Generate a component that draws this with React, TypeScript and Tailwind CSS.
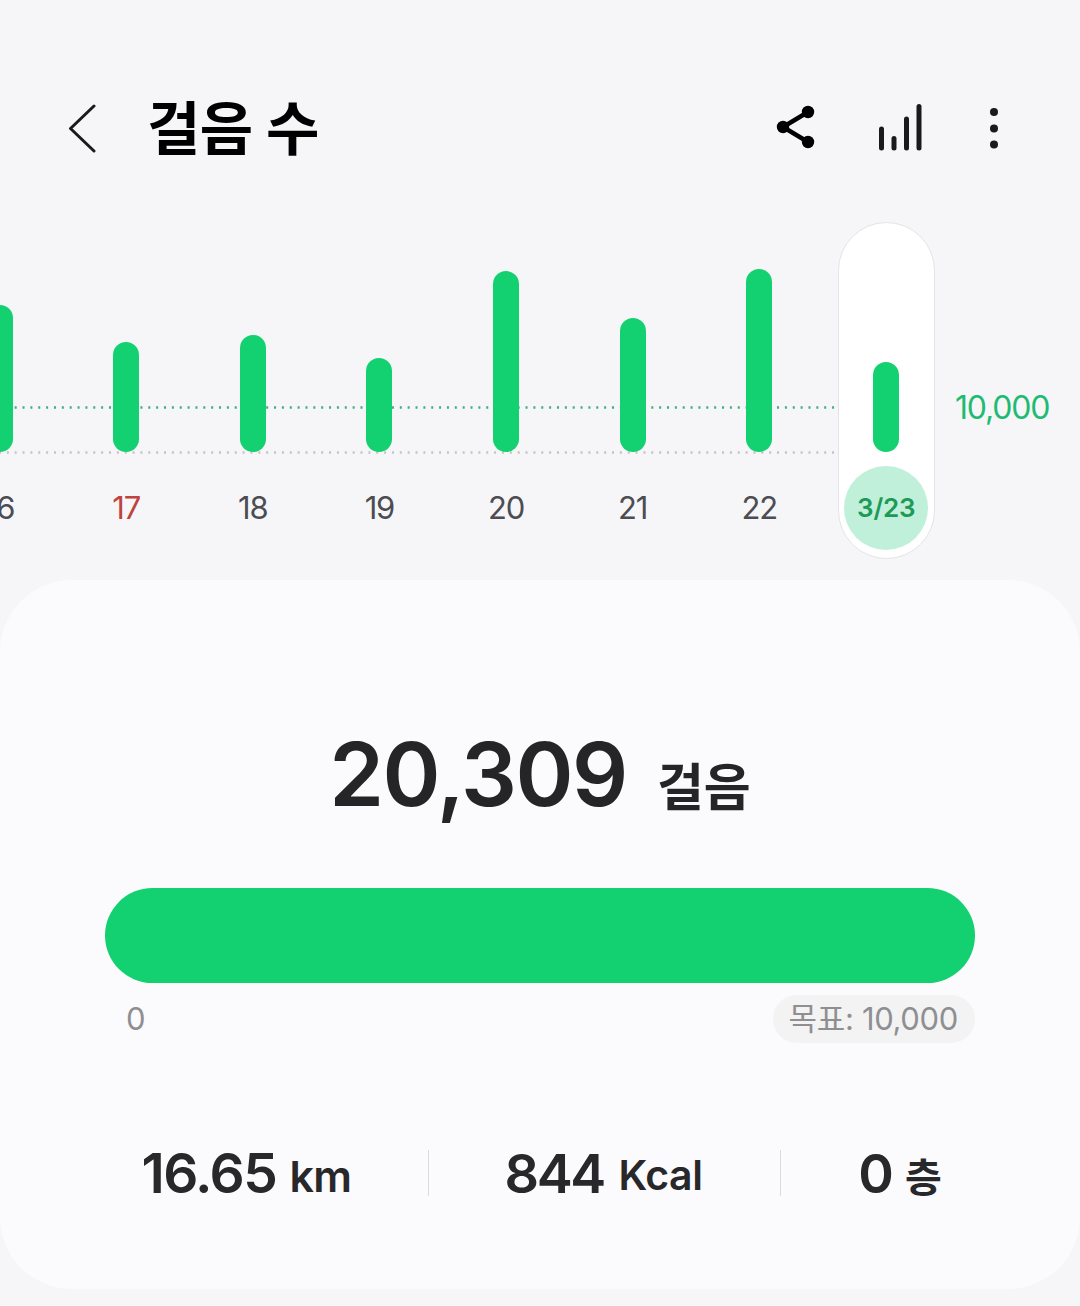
const FONT = "[font-family:Inter,'Noto_Sans_CJK_KR',sans-serif]";

// h = bar height in px, measured from the baseline of the chart
const DAYS = [
  { label: "16", h: 147 },
  { label: "17", h: 110, red: true },
  { label: "18", h: 117 },
  { label: "19", h: 94 },
  { label: "20", h: 181 },
  { label: "21", h: 134 },
  { label: "22", h: 183 },
  { label: "3/23", h: 90, selected: true },
];

function Day({ label, h, red, selected }: { label: string; h: number; red?: boolean; selected?: boolean }) {
  return (
    <div className="w-[126.6px] h-[337px] shrink-0 flex justify-center relative">
      <div
        className={
          selected
            ? "w-[97px] h-[337px] ml-[1px] shrink-0 rounded-[48.5px] bg-white border border-[#e4e4e6] flex flex-col items-center justify-end pb-[8px]"
            : "w-[97px] h-[337px] shrink-0 flex flex-col items-center justify-end pb-[9px]"
        }
      >
        <div className="w-[26px] rounded-[13px] bg-[#13d170]" style={{ height: h }} />
        {selected ? (
          <div className="mt-[14px] w-[84px] h-[84px] rounded-full bg-[#c0f0d9] flex items-center justify-center pb-[2px] text-[26px] font-semibold text-[#1e9a58] tracking-[-0.2px]">
            {label}
          </div>
        ) : (
          <div className={`mt-[14px] w-[84px] h-[84px] flex items-center justify-center text-[31px] tracking-[-1.2px] ${red ? "text-[#c0423d]" : "text-[#4c4c52]"}`}>
            {label}
          </div>
        )}
      </div>
    </div>
  );
}

export default function App() {
  return (
    <div className={`w-[1080px] h-[1306px] overflow-hidden bg-[#f6f6f8] ${FONT}`}>
      {/* Barra superior */}
      <header className="h-[222px] pl-[68px] pr-[80px] pt-[90px] flex items-start">
        <svg width="28" height="76" viewBox="0 0 28 76" className="shrink-0 text-[#1a1a1a]">
          <path d="M26 16 L2.5 38.5 L26 61" fill="none" stroke="currentColor" strokeWidth="3" strokeLinecap="round" strokeLinejoin="round" />
        </svg>
        <h1 className="ml-[51px] mt-[1px] text-[58px] leading-[76px] font-bold text-black tracking-[-0.5px]">걸음 수</h1>
        <div className="ml-auto flex items-center h-[76px]">
          <svg width="42" height="46" viewBox="0 0 42 46" className="text-black">
            <path d="M33 7 L8 22 L33 37" fill="none" stroke="currentColor" strokeWidth="4.5" />
            <circle cx="33" cy="7" r="6.2" fill="currentColor" />
            <circle cx="8" cy="22" r="6.2" fill="currentColor" />
            <circle cx="33" cy="37" r="6.2" fill="currentColor" />
          </svg>
          <svg width="46" height="50" viewBox="0 0 46 50" className="ml-[60px] text-[#1a1a1a]">
            <rect x="2" y="23.5" width="5" height="24" rx="2.5" fill="currentColor" />
            <rect x="14.5" y="33" width="5" height="14.5" rx="2.5" fill="currentColor" />
            <rect x="27" y="13.5" width="5" height="34" rx="2.5" fill="currentColor" />
            <rect x="39.5" y="1" width="5" height="46.5" rx="2.5" fill="currentColor" />
          </svg>
          <svg width="12" height="46" viewBox="0 0 12 46" className="ml-[65px] text-[#1a1a1a]">
            <circle cx="6" cy="7" r="4" fill="currentColor" />
            <circle cx="6" cy="23.5" r="4" fill="currentColor" />
            <circle cx="6" cy="39.5" r="4" fill="currentColor" />
          </svg>
        </div>
      </header>

      {/* Gráfico semanal */}
      <section className="relative h-[336px]">
        <div className="absolute left-0 w-[840px] top-[184px] h-[3px] bg-[radial-gradient(circle,#3fae80_1px,transparent_1.5px)] bg-[length:7.87px_3px] bg-[position:3.9px_0]" />
        <div className="absolute left-0 w-[840px] top-[229px] h-[3px] bg-[radial-gradient(circle,#c4c4c6_1px,transparent_1.5px)] bg-[length:7.87px_3px] bg-[position:3.9px_0]" />
        <div className="relative flex -ml-[63.7px]">
          {DAYS.map((d) => (
            <Day key={d.label} {...d} />
          ))}
        </div>
        <span className="absolute left-[955px] top-[165px] text-[32px] leading-[42px] text-[#1fbb72] tracking-[-1.2px]">10,000</span>
      </section>

      {/* Tarjeta de resumen */}
      <section className="mt-[22px] h-[709px] rounded-[72px] bg-[#fbfbfe] px-[105px] pt-[144px]">
        <div className="flex items-baseline justify-center text-[#252528]">
          <span className="text-[88px] leading-[100px] font-semibold tracking-[-1.5px]">20,309</span>
          <span className="ml-[30px] text-[51px] leading-[60px] font-semibold">걸음</span>
        </div>
        <div className="mt-[64px] h-[95px] rounded-[47.5px] bg-[#13d170]" />
        <div className="mt-[12px] flex items-center justify-between text-[31px] text-[#8f8f92]">
          <span className="ml-[21px]">0</span>
          <span className="h-[48px] pl-[16px] pr-[17px] rounded-[24px] bg-[#f3f3f4] flex items-center tracking-[-0.35px]">목표: 10,000</span>
        </div>
        <div className="mt-[107px] flex items-center text-[#28282b] font-semibold -mx-[105px]">
          <div className="w-[429px] h-[46px] border-r border-[#dcdcde] flex items-center justify-center pl-[65px]">
            <span className="text-[55px] tracking-[-1.5px]">16.65</span>
            <span className="ml-[13px] text-[43px] mt-[6px] tracking-[-0.5px]">km</span>
          </div>
          <div className="w-[352px] h-[46px] border-r border-[#dcdcde] flex items-center justify-center pr-[2px]">
            <span className="text-[54px] tracking-[-2.5px]">844</span>
            <span className="ml-[15px] text-[41px] mt-[6px] tracking-[-0.5px]">Kcal</span>
          </div>
          <div className="w-[239px] h-[46px] flex items-center justify-center pr-[1px]">
            <span className="text-[54px]">0</span>
            <span className="ml-[11px] text-[40px] mt-[9px]">층</span>
          </div>
        </div>
      </section>
    </div>
  );
}
